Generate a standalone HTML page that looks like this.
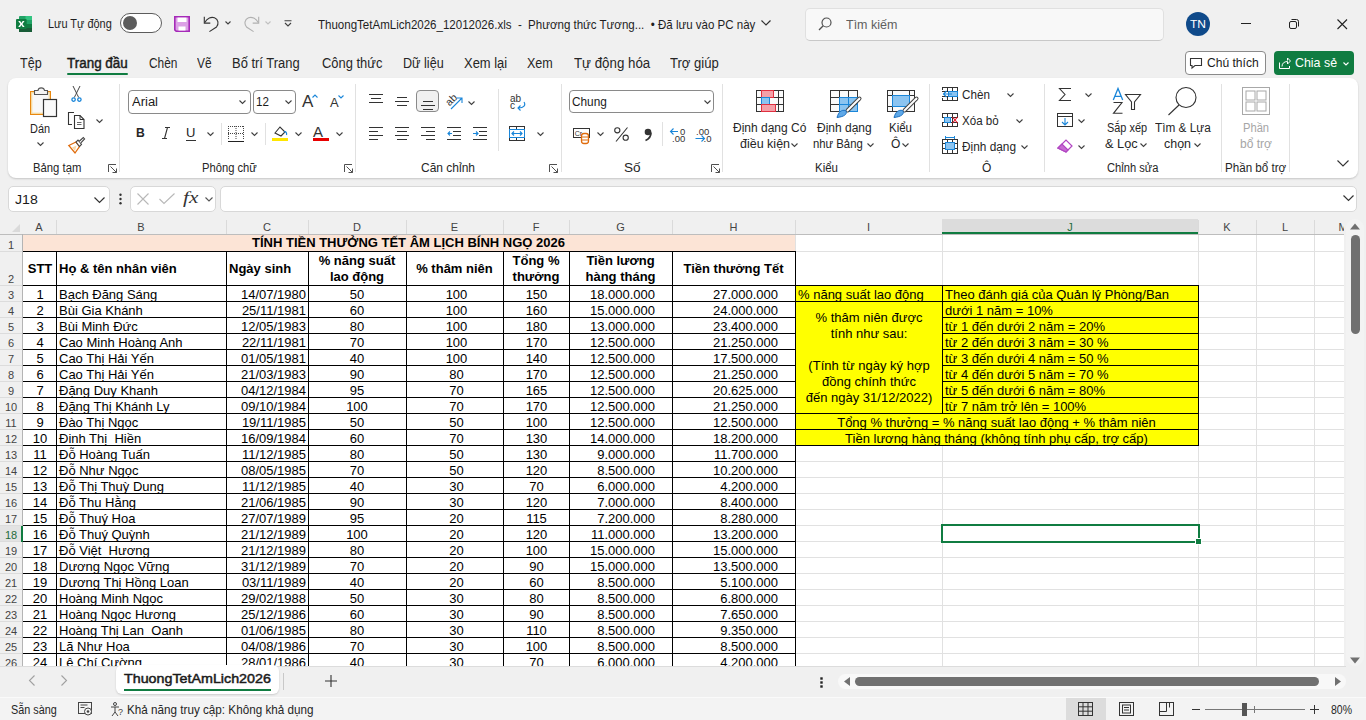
<!DOCTYPE html><html><head><meta charset="utf-8"><style>
html,body{margin:0;padding:0}
body{width:1366px;height:720px;overflow:hidden;position:relative;background:#f0f0f0;font-family:"Liberation Sans", sans-serif}
.a{position:absolute}
.t{position:absolute;white-space:nowrap;line-height:1;transform-origin:0 0}
svg{overflow:visible}
</style></head><body>
<svg class="a" style="left:16px;top:16px;" width="16" height="16" viewBox="0 0 16 16"><rect x="3" y="0" width="13" height="16" rx="1" fill="#21a366"/><rect x="9.5" y="0" width="6.5" height="4" fill="#33c481"/><rect x="3" y="8" width="13" height="4" fill="#107c41"/><rect x="3" y="12" width="13" height="4" fill="#185c37"/><rect x="0" y="3" width="10.7" height="10" rx="1" fill="#107c41"/><path d="M2.2 5h1.9l1.3 2.1L6.7 5h1.8L6.4 8l2.2 3H6.7L5.4 8.9 4.1 11H2.2l2.2-3z" fill="#fff"/></svg>
<span id="t0" class="t" style="left:48px;top:17px;font-size:13px;color:#1f1f1f;font-weight:normal;transform:scaleX(0.8421);">Lưu Tự động</span>
<div class="a" style="left:120px;top:13px;width:40px;height:18px;border:1px solid #5c5c5c;border-radius:10px;background:#fff"></div>
<div class="a" style="left:123px;top:16px;width:14px;height:14px;border-radius:50%;background:#5c5c5c"></div>
<svg class="a" style="left:174px;top:16px;" width="16" height="16" viewBox="0 0 16 16"><path d="M.8 .8h14.4v14.4H2.2L.8 13.8z" fill="#dca0e6" stroke="#a52ab8" stroke-width="1.6"/><rect x="3.5" y="1.6" width="9" height="4.4" fill="#fff"/><rect x="4.5" y="10.5" width="7" height="4" fill="#fff"/></svg>
<svg class="a" style="left:203px;top:16px;" width="18" height="17" viewBox="0 0 18 17"><path d="M1.3 .8v6.3h6" fill="none" stroke="#333" stroke-width="1.1"/><path d="M1.8 6.6C4 2 8.5 .5 11.5 1.8 15.5 3.5 16 8 13.5 11L6.4 15.6" fill="none" stroke="#333" stroke-width="1.1"/></svg>
<svg class="a" style="left:225px;top:21px;" width="6" height="4" viewBox="0 0 6 4"><path d="M.5 .5l2.5 2.5 2.5-2.5" fill="none" stroke="#404040" stroke-width="1.1"/></svg>
<svg class="a" style="left:243px;top:16px;" width="18" height="17" viewBox="0 0 18 17"><path d="M15.7 .8v6.3h-6" fill="none" stroke="#b0b0b0" stroke-width="1.1"/><path d="M15.2 6.6C13 2 8.5 .5 5.5 1.8 1.5 3.5 1 8 3.5 11L10.6 15.6" fill="none" stroke="#b0b0b0" stroke-width="1.1"/></svg>
<svg class="a" style="left:265px;top:21px;" width="6" height="4" viewBox="0 0 6 4"><path d="M.5 .5l2.5 2.5 2.5-2.5" fill="none" stroke="#c0c0c0" stroke-width="1.1"/></svg>
<svg class="a" style="left:284px;top:20px;" width="8" height="8" viewBox="0 0 8 8"><path d="M.5 .7h7M1 3l3 3 3-3" fill="none" stroke="#404040" stroke-width="1.1"/></svg>
<span id="t1" class="t" style="left:318px;top:18px;font-size:13px;color:#1f1f1f;font-weight:normal;transform:scaleX(0.8864);">ThuongTetAmLich2026_12012026.xls&nbsp; - &nbsp;Phương thức Tương...&nbsp; • Đã lưu vào PC này</span>
<svg class="a" style="left:761px;top:20px;" width="10" height="6" viewBox="0 0 10 6"><path d="M.5 .5l4.5 4.5 4.5-4.5" fill="none" stroke="#303030" stroke-width="1.2"/></svg>
<div class="a" style="left:805px;top:8px;width:357px;height:31px;background:#f8f8f8;border:1px solid #e0e0e0;border-bottom-color:#c8c8c8;border-radius:5px"></div>
<svg class="a" style="left:818px;top:17px;" width="14" height="14" viewBox="0 0 14 14"><circle cx="8.5" cy="5.5" r="4.5" fill="none" stroke="#505050" stroke-width="1.2"/><path d="M5.2 8.8L1 13" stroke="#505050" stroke-width="1.3"/></svg>
<span id="t2" class="t" style="left:846px;top:18px;font-size:13px;color:#5f5f5f;font-weight:normal;transform:scaleX(0.9623);">Tìm kiếm</span>
<div class="a" style="left:1186px;top:12px;width:24px;height:24px;border-radius:50%;background:#0f4a8a"></div>
<span id="t3" class="t" style="left:1190px;top:19px;font-size:10.5px;color:#fff;font-weight:normal;transform:scaleX(1.1429);">TN</span>
<svg class="a" style="left:1241px;top:23px;" width="10" height="2" viewBox="0 0 10 2"><path d="M0 .5h10" stroke="#222" stroke-width="1"/></svg>
<svg class="a" style="left:1289px;top:19px;" width="10" height="10" viewBox="0 0 10 10"><rect x=".5" y="2.5" width="7" height="7" rx="1.5" fill="none" stroke="#222"/><path d="M2.5 .5h5a2 2 0 0 1 2 2v5" fill="none" stroke="#222"/></svg>
<svg class="a" style="left:1337px;top:19px;" width="10" height="10" viewBox="0 0 10 10"><path d="M.5 .5l9.5 9.5M10 .5L.5 10" stroke="#222" stroke-width="1.1"/></svg>
<span id="t4" class="t" style="left:20px;top:56px;font-size:14px;color:#262626;font-weight:normal;transform:scaleX(0.8958);">Tệp</span>
<span id="t5" class="t" style="left:67px;top:56px;font-size:14px;color:#1b1b1b;font-weight:normal;transform:scaleX(0.9603);-webkit-text-stroke:0.45px #1b1b1b;">Trang đầu</span>
<span id="t6" class="t" style="left:148.5px;top:56px;font-size:14px;color:#262626;font-weight:normal;transform:scaleX(0.8485);">Chèn</span>
<span id="t7" class="t" style="left:197px;top:56px;font-size:14px;color:#262626;font-weight:normal;transform:scaleX(0.8529);">Vẽ</span>
<span id="t8" class="t" style="left:232px;top:56px;font-size:14px;color:#262626;font-weight:normal;transform:scaleX(0.9247);">Bố trí Trang</span>
<span id="t9" class="t" style="left:322px;top:56px;font-size:14px;color:#262626;font-weight:normal;transform:scaleX(0.9231);">Công thức</span>
<span id="t10" class="t" style="left:403px;top:56px;font-size:14px;color:#262626;font-weight:normal;transform:scaleX(0.9000);">Dữ liệu</span>
<span id="t11" class="t" style="left:464px;top:56px;font-size:14px;color:#262626;font-weight:normal;transform:scaleX(0.9255);">Xem lại</span>
<span id="t12" class="t" style="left:527px;top:56px;font-size:14px;color:#262626;font-weight:normal;transform:scaleX(0.8966);">Xem</span>
<span id="t13" class="t" style="left:574px;top:56px;font-size:14px;color:#262626;font-weight:normal;transform:scaleX(0.9500);">Tự động hóa</span>
<span id="t14" class="t" style="left:670px;top:56px;font-size:14px;color:#262626;font-weight:normal;transform:scaleX(0.9327);">Trợ giúp</span>
<div class="a" style="left:67px;top:73px;width:61px;height:2px;background:#107c41;border-radius:1px"></div>
<div class="a" style="left:1185px;top:51px;width:79px;height:22px;border:1px solid #8a8a8a;border-radius:4px;background:#fff"></div>
<svg class="a" style="left:1190px;top:58px;" width="12" height="11" viewBox="0 0 12 11"><path d="M.5 .5h11v7h-6.5l-3 2.5v-2.5h-1.5z" fill="none" stroke="#333" stroke-width="1.1"/></svg>
<span id="t15" class="t" style="left:1207px;top:56px;font-size:13px;color:#1b1b1b;font-weight:normal;transform:scaleX(0.9286);">Chú thích</span>
<div class="a" style="left:1274px;top:51px;width:80px;height:24px;background:#107c41;border-radius:4px"></div>
<svg class="a" style="left:1279px;top:58px;" width="12" height="11" viewBox="0 0 12 11"><path d="M.5 4.5v6h10v-2.5" fill="none" stroke="#fff" stroke-width="1"/><path d="M3 8.5c0-3.5 2.5-5 5.5-5V6l3-3-3-3v2.5" fill="none" stroke="#fff" stroke-width="1"/></svg>
<span id="t16" class="t" style="left:1295px;top:56px;font-size:13px;color:#fff;font-weight:normal;transform:scaleX(0.9545);">Chia sẻ</span>
<svg class="a" style="left:1343px;top:62px;" width="6" height="4" viewBox="0 0 6 4"><path d="M.5 .5l2.5 2.5 2.5-2.5" fill="none" stroke="#fff" stroke-width="1.1"/></svg>
<div class="a" style="left:8px;top:78px;width:1350px;height:100px;background:#fff;border-radius:8px;box-shadow:0 1px 2px rgba(0,0,0,.18)"></div>
<div class="a" style="left:119px;top:84px;width:1px;height:88px;background:#e1e1e1"></div>
<div class="a" style="left:355px;top:84px;width:1px;height:88px;background:#e1e1e1"></div>
<div class="a" style="left:561px;top:84px;width:1px;height:88px;background:#e1e1e1"></div>
<div class="a" style="left:722px;top:84px;width:1px;height:88px;background:#e1e1e1"></div>
<div class="a" style="left:929px;top:84px;width:1px;height:88px;background:#e1e1e1"></div>
<div class="a" style="left:1044px;top:84px;width:1px;height:88px;background:#e1e1e1"></div>
<div class="a" style="left:1221px;top:84px;width:1px;height:88px;background:#e1e1e1"></div>
<div class="a" style="left:1289px;top:84px;width:1px;height:88px;background:#e1e1e1"></div>
<span id="t17" class="t" style="left:33px;top:162px;font-size:12px;color:#262626;font-weight:normal;transform:scaleX(0.9412);">Bảng tạm</span>
<span id="t18" class="t" style="left:202px;top:162px;font-size:12px;color:#262626;font-weight:normal;transform:scaleX(0.9322);">Phông chữ</span>
<span id="t19" class="t" style="left:421px;top:162px;font-size:12px;color:#262626;font-weight:normal;transform:scaleX(1.0000);">Căn chỉnh</span>
<span id="t20" class="t" style="left:624px;top:162px;font-size:12px;color:#262626;font-weight:normal;transform:scaleX(1.1333);">Số</span>
<span id="t21" class="t" style="left:815px;top:162px;font-size:12px;color:#262626;font-weight:normal;transform:scaleX(0.9583);">Kiểu</span>
<span id="t22" class="t" style="left:982px;top:162px;font-size:12px;color:#262626;font-weight:normal;transform:scaleX(1.0000);">Ô</span>
<span id="t23" class="t" style="left:1107px;top:162px;font-size:12px;color:#262626;font-weight:normal;transform:scaleX(0.9273);">Chỉnh sửa</span>
<span id="t24" class="t" style="left:1225px;top:162px;font-size:12px;color:#262626;font-weight:normal;transform:scaleX(0.9683);">Phần bổ trợ</span>
<svg class="a" style="left:108px;top:164px;" width="9" height="9" viewBox="0 0 9 9"><path d="M.5 8V.5H8" fill="none" stroke="#505050"/><path d="M2.5 2.5l6 6M8.5 4.5v4h-4" fill="none" stroke="#505050"/></svg>
<svg class="a" style="left:344px;top:164px;" width="9" height="9" viewBox="0 0 9 9"><path d="M.5 8V.5H8" fill="none" stroke="#505050"/><path d="M2.5 2.5l6 6M8.5 4.5v4h-4" fill="none" stroke="#505050"/></svg>
<svg class="a" style="left:549px;top:164px;" width="9" height="9" viewBox="0 0 9 9"><path d="M.5 8V.5H8" fill="none" stroke="#505050"/><path d="M2.5 2.5l6 6M8.5 4.5v4h-4" fill="none" stroke="#505050"/></svg>
<svg class="a" style="left:711px;top:164px;" width="9" height="9" viewBox="0 0 9 9"><path d="M.5 8V.5H8" fill="none" stroke="#505050"/><path d="M2.5 2.5l6 6M8.5 4.5v4h-4" fill="none" stroke="#505050"/></svg>
<svg class="a" style="left:30px;top:86px;" width="28" height="32" viewBox="0 0 28 32"><rect x=".6" y="5.6" width="19.8" height="22.8" fill="#f8f8f8" stroke="#e8870f" stroke-width="1.2"/><rect x="1.8" y="6.8" width="17.4" height="20.4" fill="none" stroke="#f7d88f" stroke-width="1"/><path d="M4.5 8.5V4.5h3.5c.5-3.5 6-3.5 6.5 0h3v4z" fill="#f4f4f4" stroke="#555" stroke-width="1.1"/><rect x="13.5" y="13.5" width="13" height="17" fill="#fafafa" stroke="#333" stroke-width="1.2"/></svg>
<span id="t25" class="t" style="left:30px;top:123px;font-size:12px;color:#262626;font-weight:normal;transform:scaleX(0.9091);">Dán</span>
<svg class="a" style="left:37px;top:142px;" width="7" height="4" viewBox="0 0 7 4"><path d="M.5 .5l3 3 3-3" fill="none" stroke="#404040" stroke-width="1.1"/></svg>
<svg class="a" style="left:71px;top:85px;" width="11" height="17" viewBox="0 0 11 17"><path d="M2 1L6.2 9.5M9 1L4.8 9.5M4.8 9.5L3.3 12.5M6.2 9.5L7.7 12.5" fill="none" stroke="#444" stroke-width="1"/><circle cx="2.6" cy="14.6" r="1.7" fill="none" stroke="#1a86d9" stroke-width="1.3"/><circle cx="8.4" cy="14.6" r="1.7" fill="none" stroke="#1a86d9" stroke-width="1.3"/></svg>
<svg class="a" style="left:68px;top:111px;" width="17" height="18" viewBox="0 0 17 18"><path d="M6 1.5H.5v12H4" fill="none" stroke="#333" stroke-width="1.1"/><path d="M6.5 4.5H12l4 4v9H6.5z" fill="#fff" stroke="#333" stroke-width="1.1"/><path d="M12 4.5v4h4" fill="none" stroke="#333" stroke-width="1"/><path d="M9 11.5h4.5M9 13.5h4.5" stroke="#555" stroke-width=".9"/></svg>
<svg class="a" style="left:96px;top:119px;" width="7" height="4" viewBox="0 0 7 4"><path d="M.5 .5l3 3 3-3" fill="none" stroke="#404040" stroke-width="1.1"/></svg>
<svg class="a" style="left:68px;top:137px;" width="17" height="17" viewBox="0 0 17 17"><path d="M.8 8.5L8 5l3.5 4.5L7 16z" fill="#fff" stroke="#e06c0d" stroke-width="1.3"/><path d="M4 10.5L8.5 8.5 7 14z" fill="#fbd9a8"/><path d="M8 5l3.5 4.5 2-2L10 3z" fill="#fff" stroke="#444" stroke-width="1.1"/><path d="M11 4.5l4.3-4 1.3 1.5-4 4.2" fill="#fff" stroke="#444" stroke-width="1.1"/></svg>
<div class="a" style="left:128px;top:90px;width:121px;height:22px;border:1px solid #8a8a8a;border-radius:4px;background:#fff"></div>
<span id="t26" class="t" style="left:132px;top:96px;font-size:12.5px;color:#1b1b1b;font-weight:normal;transform:scaleX(1.0400);">Arial</span>
<svg class="a" style="left:239px;top:100px;" width="7" height="4" viewBox="0 0 7 4"><path d="M.5 .5l3 3 3-3" fill="none" stroke="#404040" stroke-width="1.1"/></svg>
<div class="a" style="left:253px;top:90px;width:41px;height:22px;border:1px solid #8a8a8a;border-radius:4px;background:#fff"></div>
<span id="t27" class="t" style="left:256px;top:96px;font-size:12.5px;color:#1b1b1b;font-weight:normal;transform:scaleX(0.9286);">12</span>
<svg class="a" style="left:285px;top:100px;" width="7" height="4" viewBox="0 0 7 4"><path d="M.5 .5l3 3 3-3" fill="none" stroke="#404040" stroke-width="1.1"/></svg>
<span id="t28" class="t" style="left:302px;top:93px;font-size:17px;color:#333;font-weight:normal;transform:scaleX(1.0000);">A</span>
<svg class="a" style="left:312px;top:94px;" width="6" height="4" viewBox="0 0 6 4"><path d="M.5 3.5l2.5-2.5 2.5 2.5" fill="none" stroke="#1a86d9" stroke-width="1.1"/></svg>
<span id="t29" class="t" style="left:330px;top:96px;font-size:13px;color:#333;font-weight:normal;transform:scaleX(1.0000);">A</span>
<svg class="a" style="left:338px;top:95px;" width="6" height="4" viewBox="0 0 6 4"><path d="M.5 .5l2.5 2.5 2.5-2.5" fill="none" stroke="#1a86d9" stroke-width="1.1"/></svg>
<span id="t30" class="t" style="left:136px;top:126px;font-size:13.5px;color:#262626;font-weight:bold;transform:scaleX(0.9000);">B</span>
<svg class="a" style="left:162px;top:126px;" width="8" height="14" viewBox="0 0 8 14"><path d="M3 1.5h5M0 12.5h5M5.5 1.5L2.5 12.5" fill="none" stroke="#333" stroke-width="1.1"/></svg>
<span id="t31" class="t" style="left:186px;top:126px;font-size:13px;color:#262626;font-weight:normal;transform:scaleX(1.0000);">U</span>
<div class="a" style="left:186px;top:140px;width:10px;height:1px;background:#333"></div>
<svg class="a" style="left:207px;top:132px;" width="7" height="4" viewBox="0 0 7 4"><path d="M.5 .5l3 3 3-3" fill="none" stroke="#404040" stroke-width="1.1"/></svg>
<div class="a" style="left:221px;top:123px;width:1px;height:22px;background:#e1e1e1"></div>
<svg class="a" style="left:228px;top:126px;" width="16" height="16" viewBox="0 0 16 16"><path d="M.5 0v14M15.5 0v14M0 .5h16M8 0v14M0 7.5h16" fill="none" stroke="#444" stroke-dasharray="1 1"/><path d="M0 15.5h16" stroke="#222" stroke-width="1"/></svg>
<svg class="a" style="left:251px;top:132px;" width="7" height="4" viewBox="0 0 7 4"><path d="M.5 .5l3 3 3-3" fill="none" stroke="#404040" stroke-width="1.1"/></svg>
<div class="a" style="left:265px;top:123px;width:1px;height:22px;background:#e1e1e1"></div>
<svg class="a" style="left:272px;top:125px;" width="17" height="17" viewBox="0 0 17 17"><path d="M3 8l5-6 5 5-4 4z" fill="none" stroke="#333" stroke-width="1.1"/><path d="M12 7c2 -1 3 1 2.5 3" fill="none" stroke="#1a86d9" stroke-width="1.2"/><rect x="0" y="13" width="16" height="3" fill="#ffe600"/></svg>
<svg class="a" style="left:295px;top:132px;" width="7" height="4" viewBox="0 0 7 4"><path d="M.5 .5l3 3 3-3" fill="none" stroke="#404040" stroke-width="1.1"/></svg>
<span id="t32" class="t" style="left:313px;top:124px;font-size:15px;color:#333;font-weight:normal;transform:scaleX(1.0000);">A</span>
<div class="a" style="left:313px;top:138px;width:16px;height:3px;background:#e80000"></div>
<svg class="a" style="left:336px;top:132px;" width="7" height="4" viewBox="0 0 7 4"><path d="M.5 .5l3 3 3-3" fill="none" stroke="#404040" stroke-width="1.1"/></svg>
<svg class="a" style="left:369px;top:94px;" width="15" height="12" viewBox="0 0 15 12"><path d="M0 0.5 H14" stroke="#333" stroke-width="1"/><path d="M2 4.5 H12" stroke="#333" stroke-width="1"/><path d="M0 8.5 H14" stroke="#333" stroke-width="1"/></svg>
<svg class="a" style="left:395px;top:97px;" width="15" height="12" viewBox="0 0 15 12"><path d="M2 0.5 H12" stroke="#333" stroke-width="1"/><path d="M0 4.5 H14" stroke="#333" stroke-width="1"/><path d="M2 8.5 H12" stroke="#333" stroke-width="1"/></svg>
<div class="a" style="left:416px;top:90px;width:23px;height:22px;background:#f0f0f0;border:1px solid #8a8a8a;border-radius:4px;box-sizing:border-box"></div>
<svg class="a" style="left:421px;top:101px;" width="15" height="12" viewBox="0 0 15 12"><path d="M2 0.5 H12" stroke="#333" stroke-width="1"/><path d="M0 4.5 H14" stroke="#333" stroke-width="1"/><path d="M2 8.5 H12" stroke="#333" stroke-width="1"/></svg>
<svg class="a" style="left:445px;top:92px;" width="19" height="19" viewBox="0 0 19 19"><text x="0" y="0" font-size="10.5" fill="#333" font-family="Liberation Sans" transform="translate(4.5 14.5) rotate(-45)">ab</text><path d="M6 17L16.5 6.5M12 6h5v5" fill="none" stroke="#1a86d9" stroke-width="1.1"/></svg>
<svg class="a" style="left:468px;top:101px;" width="7" height="4" viewBox="0 0 7 4"><path d="M.5 .5l3 3 3-3" fill="none" stroke="#404040" stroke-width="1.1"/></svg>
<svg class="a" style="left:369px;top:127px;" width="15" height="14" viewBox="0 0 15 14"><path d="M0 0.5 H14" stroke="#333" stroke-width="1"/><path d="M0 4.5 H9" stroke="#333" stroke-width="1"/><path d="M0 8.5 H14" stroke="#333" stroke-width="1"/><path d="M0 12.5 H9" stroke="#333" stroke-width="1"/></svg>
<svg class="a" style="left:395px;top:127px;" width="15" height="14" viewBox="0 0 15 14"><path d="M0 0.5 H14" stroke="#333" stroke-width="1"/><path d="M2 4.5 H12" stroke="#333" stroke-width="1"/><path d="M0 8.5 H14" stroke="#333" stroke-width="1"/><path d="M2 12.5 H12" stroke="#333" stroke-width="1"/></svg>
<svg class="a" style="left:421px;top:127px;" width="15" height="14" viewBox="0 0 15 14"><path d="M0 0.5 H14" stroke="#333" stroke-width="1"/><path d="M5 4.5 H14" stroke="#333" stroke-width="1"/><path d="M0 8.5 H14" stroke="#333" stroke-width="1"/><path d="M5 12.5 H14" stroke="#333" stroke-width="1"/></svg>
<svg class="a" style="left:447px;top:127px;" width="15" height="14" viewBox="0 0 15 14"><path d="M0 .5H14M6 4.5H14M6 8.5H14M0 12.5H14" stroke="#333" stroke-width="1"/><path d="M5 6.5H.8M3 4.5L1 6.5l2 2" fill="none" stroke="#1a86d9" stroke-width="1.1"/></svg>
<svg class="a" style="left:473px;top:127px;" width="15" height="14" viewBox="0 0 15 14"><path d="M0 .5H14M6 4.5H14M6 8.5H14M0 12.5H14" stroke="#333" stroke-width="1"/><path d="M0 6.5H4.5M3 4.5l2 2-2 2" fill="none" stroke="#1a86d9" stroke-width="1.1"/></svg>
<div class="a" style="left:498px;top:89px;width:1px;height:62px;background:#e1e1e1"></div>
<svg class="a" style="left:510px;top:93px;" width="18" height="18" viewBox="0 0 18 18"><text x="0" y="8.5" font-size="10" fill="#333" font-family="Liberation Sans">ab</text><text x="0" y="16" font-size="10" fill="#333" font-family="Liberation Sans">c</text><path d="M14 9c2 3 0 6-5.5 6M10.5 12.5L8 15l2.5 2.5" fill="none" stroke="#1a86d9" stroke-width="1.1"/></svg>
<svg class="a" style="left:509px;top:126px;" width="16" height="15" viewBox="0 0 16 15"><rect x=".5" y=".5" width="15" height="14" fill="#fff" stroke="#333"/><path d="M7.5 0v3M7.5 12v3" stroke="#333"/><rect x=".5" y="3.5" width="15" height="8" fill="#fff" stroke="#1a86d9"/><path d="M3 7.5h10M5 5.5L3 7.5l2 2M11 5.5l2 2-2 2" fill="none" stroke="#1a86d9" stroke-width="1.2"/></svg>
<svg class="a" style="left:537px;top:132px;" width="7" height="4" viewBox="0 0 7 4"><path d="M.5 .5l3 3 3-3" fill="none" stroke="#404040" stroke-width="1.1"/></svg>
<div class="a" style="left:569px;top:90px;width:145px;height:23px;border:1px solid #8a8a8a;border-radius:4px;background:#fff;box-sizing:border-box"></div>
<span id="t33" class="t" style="left:572px;top:96px;font-size:12.5px;color:#1b1b1b;font-weight:normal;transform:scaleX(0.9459);">Chung</span>
<svg class="a" style="left:704px;top:100px;" width="7" height="4" viewBox="0 0 7 4"><path d="M.5 .5l3 3 3-3" fill="none" stroke="#404040" stroke-width="1.1"/></svg>
<svg class="a" style="left:573px;top:128px;" width="18" height="17" viewBox="0 0 18 17"><rect x=".5" y=".5" width="16" height="9" fill="#fff" stroke="#333"/><text x="1.8" y="7.8" font-size="7" fill="#333" font-family="Liberation Sans">Cr</text><rect x="8.5" y="5.5" width="7" height="10" rx="2.5" fill="#fff" stroke="#e06c0d" stroke-width="1.3"/><path d="M8.5 9h7M8.5 12h7" stroke="#e06c0d" stroke-width="1"/></svg>
<svg class="a" style="left:597px;top:132px;" width="7" height="4" viewBox="0 0 7 4"><path d="M.5 .5l3 3 3-3" fill="none" stroke="#404040" stroke-width="1.1"/></svg>
<svg class="a" style="left:614px;top:127px;" width="16" height="15" viewBox="0 0 16 15"><circle cx="3.3" cy="3.3" r="2.6" fill="none" stroke="#333" stroke-width="1.1"/><circle cx="11.7" cy="10.7" r="2.6" fill="none" stroke="#333" stroke-width="1.1"/><path d="M2 14.5L13.5 .5" stroke="#333" stroke-width="1.1"/></svg>
<svg class="a" style="left:643px;top:128px;" width="10" height="13" viewBox="0 0 10 13"><circle cx="5" cy="4" r="3.3" fill="#333"/><path d="M8 4.5C8 8 6 11 2.5 12.5" fill="none" stroke="#333" stroke-width="1.8"/></svg>
<div class="a" style="left:662px;top:122px;width:1px;height:24px;background:#e1e1e1"></div>
<svg class="a" style="left:669px;top:126px;" width="17" height="17" viewBox="0 0 17 17"><path d="M9 5.5H1.5M4.5 2.5L1.5 5.5l3 3" fill="none" stroke="#1a86d9" stroke-width="1.1"/><text x="11" y="9" font-size="9.5" fill="#333" font-family="Liberation Sans">0</text><text x="3" y="16" font-size="9.5" fill="#333" font-family="Liberation Sans">.00</text></svg>
<svg class="a" style="left:695px;top:126px;" width="17" height="17" viewBox="0 0 17 17"><text x="1" y="9" font-size="9.5" fill="#333" font-family="Liberation Sans">.00</text><path d="M.5 12.5h9M6.5 9.5l3 3-3 3" fill="none" stroke="#1a86d9" stroke-width="1.1"/><text x="8.5" y="16" font-size="9.5" fill="#333" font-family="Liberation Sans">.0</text></svg>
<svg class="a" style="left:756px;top:90px;" width="28" height="22" viewBox="0 0 28 22"><rect x=".5" y=".5" width="27" height="21" fill="#fafafa" stroke="#333"/><path d="M.5 7.5h27M.5 14.5h27M5.5 .5v21M22.5 .5v21" stroke="#333" fill="none"/><rect x="5.5" y=".5" width="12" height="7" fill="#f4a0a8" stroke="#e03040"/><rect x="5.5" y="7.5" width="8" height="7" fill="#8cc4f0" stroke="#1a86d9"/><rect x="5.5" y="14.5" width="14" height="7" fill="#f4a0a8" stroke="#e03040"/></svg>
<span id="t34" class="t" style="left:733px;top:122px;font-size:12px;color:#262626;font-weight:normal;transform:scaleX(1.0000);">Định dạng Có</span>
<span id="t35" class="t" style="left:740px;top:138px;font-size:12px;color:#262626;font-weight:normal;transform:scaleX(1.0417);">điều kiện</span>
<svg class="a" style="left:791px;top:143px;" width="7" height="4" viewBox="0 0 7 4"><path d="M.5 .5l3 3 3-3" fill="none" stroke="#404040" stroke-width="1.1"/></svg>
<svg class="a" style="left:830px;top:90px;" width="32" height="28" viewBox="0 0 32 28"><rect x=".5" y=".5" width="27" height="21" fill="#fafafa" stroke="#333"/><path d="M.5 7.5h27M.5 14.5h27M9.5 .5v21M18.5 .5v21" stroke="#333" fill="none"/><rect x="9.5" y="7.5" width="18" height="14" fill="#8cc4f0" stroke="#1a86d9"/><path d="M9.5 14.5h18M18.5 7.5v14" stroke="#1a86d9"/><path d="M29.5 8.5L17.5 20.5" stroke="#444" stroke-width="4" stroke-linecap="round"/><path d="M29.5 8.5L17.5 20.5" stroke="#fff" stroke-width="2" stroke-linecap="round"/><path d="M7 27.5C8.5 22 11.5 19.5 15.5 20.5 17.5 22.5 16.5 26.5 7 27.5z" fill="#5ea8e8" stroke="#1a6fc0" stroke-width="1"/></svg>
<span id="t36" class="t" style="left:817px;top:122px;font-size:12px;color:#262626;font-weight:normal;transform:scaleX(1.0000);">Định dạng</span>
<span id="t37" class="t" style="left:813px;top:138px;font-size:12px;color:#262626;font-weight:normal;transform:scaleX(0.9434);">như Bảng</span>
<svg class="a" style="left:867px;top:143px;" width="7" height="4" viewBox="0 0 7 4"><path d="M.5 .5l3 3 3-3" fill="none" stroke="#404040" stroke-width="1.1"/></svg>
<svg class="a" style="left:887px;top:90px;" width="32" height="28" viewBox="0 0 32 28"><rect x=".5" y=".5" width="27" height="21" fill="#fafafa" stroke="#333"/><path d="M.5 5.5h27M5.5 .5v21M.5 16.5h5M22.5 .5v5" stroke="#333" fill="none"/><rect x="5.5" y="5.5" width="17" height="11" fill="#8cc4f0" stroke="#1a86d9"/><path d="M29.5 8.5L17.5 20.5" stroke="#444" stroke-width="4" stroke-linecap="round"/><path d="M29.5 8.5L17.5 20.5" stroke="#fff" stroke-width="2" stroke-linecap="round"/><path d="M7 27.5C8.5 22 11.5 19.5 15.5 20.5 17.5 22.5 16.5 26.5 7 27.5z" fill="#5ea8e8" stroke="#1a6fc0" stroke-width="1"/></svg>
<span id="t38" class="t" style="left:889px;top:122px;font-size:12px;color:#262626;font-weight:normal;transform:scaleX(0.9583);">Kiểu</span>
<span id="t39" class="t" style="left:891px;top:138px;font-size:12px;color:#262626;font-weight:normal;transform:scaleX(1.0000);">Ô</span>
<svg class="a" style="left:902px;top:143px;" width="7" height="4" viewBox="0 0 7 4"><path d="M.5 .5l3 3 3-3" fill="none" stroke="#404040" stroke-width="1.1"/></svg>
<svg class="a" style="left:942px;top:87px;" width="16" height="14" viewBox="0 0 16 14"><path d="M0 .5h16M0 13.5h16M15.5 0v14M.5 0v3M.5 11v3M5.5 0v4M5.5 10v4M10.5 0v14M0 4.5h7M0 9.5h7" fill="none" stroke="#333"/><rect x="6.5" y="4.5" width="9" height="5" fill="#8cc4f0" stroke="#1a86d9"/><path d="M10 7H1.5M4.5 4L1.5 7l3 3" fill="none" stroke="#1a86d9" stroke-width="1.2"/></svg>
<span id="t40" class="t" style="left:962px;top:89px;font-size:12.5px;color:#262626;font-weight:normal;transform:scaleX(0.9333);">Chèn</span>
<svg class="a" style="left:1007px;top:93px;" width="7" height="4" viewBox="0 0 7 4"><path d="M.5 .5l3 3 3-3" fill="none" stroke="#404040" stroke-width="1.1"/></svg>
<svg class="a" style="left:942px;top:113px;" width="16" height="14" viewBox="0 0 16 14"><path d="M0 .5h16M0 13.5h16M15.5 0v4M15.5 10v4M.5 0v4M.5 10v4M5.5 0v14M10.5 0v14M0 4.5h16M0 9.5h16" fill="none" stroke="#333"/><rect x="2.5" y="4.5" width="6" height="5" fill="#8cc4f0" stroke="#1a86d9"/><path d="M10.5 4l5 6M15.5 4l-5 6" stroke="#e81123" stroke-width="1.1"/></svg>
<span id="t41" class="t" style="left:962px;top:115px;font-size:12.5px;color:#262626;font-weight:normal;transform:scaleX(0.9250);">Xóa bỏ</span>
<svg class="a" style="left:1016px;top:119px;" width="7" height="4" viewBox="0 0 7 4"><path d="M.5 .5l3 3 3-3" fill="none" stroke="#404040" stroke-width="1.1"/></svg>
<svg class="a" style="left:942px;top:136px;" width="16" height="18" viewBox="0 0 16 18"><path d="M3 1.5h10M3.5 0v3M12.5 0v3" fill="none" stroke="#1a86d9"/><rect x=".5" y="3.5" width="15" height="14" fill="#fff" stroke="#333"/><path d="M5.5 3.5v14M10.5 3.5v14M.5 7.5h15M.5 12.5h15" stroke="#333"/><rect x="3.5" y="6.5" width="9" height="7" fill="#8cc4f0" stroke="#1a86d9"/></svg>
<span id="t42" class="t" style="left:962px;top:141px;font-size:12.5px;color:#262626;font-weight:normal;transform:scaleX(0.9474);">Định dạng</span>
<svg class="a" style="left:1021px;top:145px;" width="7" height="4" viewBox="0 0 7 4"><path d="M.5 .5l3 3 3-3" fill="none" stroke="#404040" stroke-width="1.1"/></svg>
<svg class="a" style="left:1058px;top:87px;" width="14" height="15" viewBox="0 0 14 15"><path d="M13 1.5H1.5L7 7.5 1.5 13.5H13" fill="none" stroke="#333" stroke-width="1.1"/></svg>
<svg class="a" style="left:1085px;top:93px;" width="7" height="4" viewBox="0 0 7 4"><path d="M.5 .5l3 3 3-3" fill="none" stroke="#404040" stroke-width="1.1"/></svg>
<svg class="a" style="left:1057px;top:113px;" width="16" height="15" viewBox="0 0 16 15"><rect x=".5" y=".5" width="15" height="13" fill="#fff" stroke="#333"/><path d="M.5 3.5h15" stroke="#333"/><path d="M8 5v7M5 9l3 3 3-3" fill="none" stroke="#1a86d9" stroke-width="1.1"/></svg>
<svg class="a" style="left:1078px;top:119px;" width="7" height="4" viewBox="0 0 7 4"><path d="M.5 .5l3 3 3-3" fill="none" stroke="#404040" stroke-width="1.1"/></svg>
<svg class="a" style="left:1057px;top:138px;" width="16" height="16" viewBox="0 0 16 16"><path d="M1 10l8-8 6 6-6 6z" fill="#fff" stroke="#b146c2" stroke-width="1.2"/><path d="M1 10l4-4 6 6-2 2z" fill="#c76bd3" stroke="#b146c2" stroke-width="1.2"/></svg>
<svg class="a" style="left:1078px;top:145px;" width="7" height="4" viewBox="0 0 7 4"><path d="M.5 .5l3 3 3-3" fill="none" stroke="#404040" stroke-width="1.1"/></svg>
<svg class="a" style="left:1111px;top:87px;" width="32" height="28" viewBox="0 0 32 28"><path d="M2.3 13L7 1.5 11.7 13M3.8 9.3h6.4" fill="none" stroke="#1a86d9" stroke-width="1.3"/><path d="M2.5 15.5h8.5L2.5 26.3h9" fill="none" stroke="#333" stroke-width="1.1"/><path d="M14.5 7.5h15l-6 7.5v7.5h-3V15z" fill="#fff" stroke="#333" stroke-width="1.1"/></svg>
<span id="t43" class="t" style="left:1107px;top:122px;font-size:12px;color:#262626;font-weight:normal;transform:scaleX(0.9091);">Sắp xếp</span>
<span id="t44" class="t" style="left:1105px;top:138px;font-size:12px;color:#262626;font-weight:normal;transform:scaleX(1.0645);">&amp; Lọc</span>
<svg class="a" style="left:1140px;top:143px;" width="7" height="4" viewBox="0 0 7 4"><path d="M.5 .5l3 3 3-3" fill="none" stroke="#404040" stroke-width="1.1"/></svg>
<svg class="a" style="left:1167px;top:86px;" width="31" height="30" viewBox="0 0 31 30"><circle cx="19" cy="11.5" r="10" fill="none" stroke="#333" stroke-width="1.1"/><path d="M12 19L1.5 29" stroke="#333" stroke-width="1.1"/></svg>
<span id="t45" class="t" style="left:1155px;top:122px;font-size:12px;color:#262626;font-weight:normal;transform:scaleX(0.9825);">Tìm &amp; Lựa</span>
<span id="t46" class="t" style="left:1164px;top:138px;font-size:12px;color:#262626;font-weight:normal;transform:scaleX(1.0385);">chọn</span>
<svg class="a" style="left:1194px;top:143px;" width="7" height="4" viewBox="0 0 7 4"><path d="M.5 .5l3 3 3-3" fill="none" stroke="#404040" stroke-width="1.1"/></svg>
<svg class="a" style="left:1242px;top:87px;" width="28" height="28" viewBox="0 0 28 28"><rect x=".5" y=".5" width="27" height="27" fill="none" stroke="#a8a8a8"/><rect x="4" y="4" width="9" height="9" fill="none" stroke="#a8a8a8"/><rect x="15" y="4" width="9" height="9" fill="none" stroke="#a8a8a8"/><rect x="4" y="15" width="9" height="9" fill="none" stroke="#a8a8a8"/><rect x="15" y="15" width="9" height="9" fill="none" stroke="#a8a8a8"/></svg>
<span id="t47" class="t" style="left:1243px;top:122px;font-size:12px;color:#a6a6a6;font-weight:normal;transform:scaleX(0.9286);">Phần</span>
<span id="t48" class="t" style="left:1240px;top:138px;font-size:12px;color:#a6a6a6;font-weight:normal;transform:scaleX(1.0000);">bổ trợ</span>
<svg class="a" style="left:1337px;top:160px;" width="12" height="7" viewBox="0 0 12 7"><path d="M.5 .5l5.5 5.5 5.5-5.5" fill="none" stroke="#333" stroke-width="1.1"/></svg>
<div class="a" style="left:8px;top:186px;width:102px;height:26px;background:#fff;border:1px solid #d8d8d8;border-radius:5px;box-sizing:border-box"></div>
<span id="t49" class="t" style="left:15px;top:193px;font-size:13.5px;color:#1b1b1b;font-weight:normal;transform:scaleX(1.0455);">J18</span>
<svg class="a" style="left:94px;top:197px;" width="11" height="6" viewBox="0 0 11 6"><path d="M.5 .5l5 5 5-5" fill="none" stroke="#333" stroke-width="1.2"/></svg>
<svg class="a" style="left:119px;top:193px;" width="3" height="12" viewBox="0 0 3 12"><circle cx="1.5" cy="1.8" r="1.2" fill="#333"/><circle cx="1.5" cy="6" r="1.2" fill="#333"/><circle cx="1.5" cy="10.2" r="1.2" fill="#333"/></svg>
<div class="a" style="left:130px;top:186px;width:86px;height:26px;background:#fff;border:1px solid #d8d8d8;border-radius:5px;box-sizing:border-box"></div>
<svg class="a" style="left:137px;top:193px;" width="12" height="12" viewBox="0 0 12 12"><path d="M.5 .5l11 11M11.5 .5l-11 11" stroke="#b8b8b8" stroke-width="1.1"/></svg>
<svg class="a" style="left:159px;top:193px;" width="16" height="11" viewBox="0 0 16 11"><path d="M.5 6l4.5 4.5L15.5 .5" fill="none" stroke="#b8b8b8" stroke-width="1.1"/></svg>
<span id="t50" class="t" style="left:183px;top:189px;font-size:17px;color:#333;font-weight:normal;transform:scaleX(1.2500);font-family:\"Liberation Serif\",serif;"><i>fx</i></span>
<svg class="a" style="left:205px;top:197px;" width="8" height="5" viewBox="0 0 8 5"><path d="M.5 .5l3.5 3.5 3.5-3.5" fill="none" stroke="#555" stroke-width="1.1"/></svg>
<div class="a" style="left:220px;top:186px;width:1137px;height:26px;background:#fff;border:1px solid #d8d8d8;border-radius:5px;box-sizing:border-box"></div>
<svg class="a" style="left:1343px;top:195px;" width="11" height="6" viewBox="0 0 11 6"><path d="M.5 .5l5 5 5-5" fill="none" stroke="#333" stroke-width="1.2"/></svg>
<div class="a" style="left:0px;top:219px;width:1344px;height:447px;background:#fff;overflow:hidden"></div>
<div class="a" style="left:0;top:219px;width:1344px;height:447px;overflow:hidden">
<div class="a" style="left:0px;top:0px;width:1344px;height:15px;background:#f0f0f0"></div>
<div class="a" style="left:0px;top:15px;width:22px;height:432px;background:#f0f0f0"></div>
<div class="a" style="left:56px;top:15px;width:1px;height:432px;background:#e1e1e1"></div>
<div class="a" style="left:226px;top:15px;width:1px;height:432px;background:#e1e1e1"></div>
<div class="a" style="left:308px;top:15px;width:1px;height:432px;background:#e1e1e1"></div>
<div class="a" style="left:406px;top:15px;width:1px;height:432px;background:#e1e1e1"></div>
<div class="a" style="left:503px;top:15px;width:1px;height:432px;background:#e1e1e1"></div>
<div class="a" style="left:569px;top:15px;width:1px;height:432px;background:#e1e1e1"></div>
<div class="a" style="left:672px;top:15px;width:1px;height:432px;background:#e1e1e1"></div>
<div class="a" style="left:795px;top:15px;width:1px;height:432px;background:#e1e1e1"></div>
<div class="a" style="left:942px;top:15px;width:1px;height:432px;background:#e1e1e1"></div>
<div class="a" style="left:1198px;top:15px;width:1px;height:432px;background:#e1e1e1"></div>
<div class="a" style="left:1256px;top:15px;width:1px;height:432px;background:#e1e1e1"></div>
<div class="a" style="left:1314px;top:15px;width:1px;height:432px;background:#e1e1e1"></div>
<div class="a" style="left:1372px;top:15px;width:1px;height:432px;background:#e1e1e1"></div>
<div class="a" style="left:22px;top:32px;width:1322px;height:1px;background:#e1e1e1"></div>
<div class="a" style="left:22px;top:66px;width:1322px;height:1px;background:#e1e1e1"></div>
<div class="a" style="left:22px;top:82px;width:1322px;height:1px;background:#e1e1e1"></div>
<div class="a" style="left:22px;top:98px;width:1322px;height:1px;background:#e1e1e1"></div>
<div class="a" style="left:22px;top:114px;width:1322px;height:1px;background:#e1e1e1"></div>
<div class="a" style="left:22px;top:130px;width:1322px;height:1px;background:#e1e1e1"></div>
<div class="a" style="left:22px;top:146px;width:1322px;height:1px;background:#e1e1e1"></div>
<div class="a" style="left:22px;top:162px;width:1322px;height:1px;background:#e1e1e1"></div>
<div class="a" style="left:22px;top:178px;width:1322px;height:1px;background:#e1e1e1"></div>
<div class="a" style="left:22px;top:194px;width:1322px;height:1px;background:#e1e1e1"></div>
<div class="a" style="left:22px;top:210px;width:1322px;height:1px;background:#e1e1e1"></div>
<div class="a" style="left:22px;top:226px;width:1322px;height:1px;background:#e1e1e1"></div>
<div class="a" style="left:22px;top:242px;width:1322px;height:1px;background:#e1e1e1"></div>
<div class="a" style="left:22px;top:258px;width:1322px;height:1px;background:#e1e1e1"></div>
<div class="a" style="left:22px;top:274px;width:1322px;height:1px;background:#e1e1e1"></div>
<div class="a" style="left:22px;top:290px;width:1322px;height:1px;background:#e1e1e1"></div>
<div class="a" style="left:22px;top:306px;width:1322px;height:1px;background:#e1e1e1"></div>
<div class="a" style="left:22px;top:322px;width:1322px;height:1px;background:#e1e1e1"></div>
<div class="a" style="left:22px;top:338px;width:1322px;height:1px;background:#e1e1e1"></div>
<div class="a" style="left:22px;top:354px;width:1322px;height:1px;background:#e1e1e1"></div>
<div class="a" style="left:22px;top:370px;width:1322px;height:1px;background:#e1e1e1"></div>
<div class="a" style="left:22px;top:386px;width:1322px;height:1px;background:#e1e1e1"></div>
<div class="a" style="left:22px;top:402px;width:1322px;height:1px;background:#e1e1e1"></div>
<div class="a" style="left:22px;top:418px;width:1322px;height:1px;background:#e1e1e1"></div>
<div class="a" style="left:22px;top:434px;width:1322px;height:1px;background:#e1e1e1"></div>
<div class="a" style="left:22px;top:450px;width:1322px;height:1px;background:#e1e1e1"></div>
<div class="a" style="left:56px;top:1px;width:1px;height:14px;background:#dadada"></div>
<div class="a" style="left:226px;top:1px;width:1px;height:14px;background:#dadada"></div>
<div class="a" style="left:308px;top:1px;width:1px;height:14px;background:#dadada"></div>
<div class="a" style="left:406px;top:1px;width:1px;height:14px;background:#dadada"></div>
<div class="a" style="left:503px;top:1px;width:1px;height:14px;background:#dadada"></div>
<div class="a" style="left:569px;top:1px;width:1px;height:14px;background:#dadada"></div>
<div class="a" style="left:672px;top:1px;width:1px;height:14px;background:#dadada"></div>
<div class="a" style="left:795px;top:1px;width:1px;height:14px;background:#dadada"></div>
<div class="a" style="left:942px;top:1px;width:1px;height:14px;background:#dadada"></div>
<div class="a" style="left:1198px;top:1px;width:1px;height:14px;background:#dadada"></div>
<div class="a" style="left:1256px;top:1px;width:1px;height:14px;background:#dadada"></div>
<div class="a" style="left:1314px;top:1px;width:1px;height:14px;background:#dadada"></div>
<div class="a" style="left:1372px;top:1px;width:1px;height:14px;background:#dadada"></div>
<div class="a" style="left:0px;top:32px;width:22px;height:1px;background:#dcdcdc"></div>
<div class="a" style="left:0px;top:66px;width:22px;height:1px;background:#dcdcdc"></div>
<div class="a" style="left:0px;top:82px;width:22px;height:1px;background:#dcdcdc"></div>
<div class="a" style="left:0px;top:98px;width:22px;height:1px;background:#dcdcdc"></div>
<div class="a" style="left:0px;top:114px;width:22px;height:1px;background:#dcdcdc"></div>
<div class="a" style="left:0px;top:130px;width:22px;height:1px;background:#dcdcdc"></div>
<div class="a" style="left:0px;top:146px;width:22px;height:1px;background:#dcdcdc"></div>
<div class="a" style="left:0px;top:162px;width:22px;height:1px;background:#dcdcdc"></div>
<div class="a" style="left:0px;top:178px;width:22px;height:1px;background:#dcdcdc"></div>
<div class="a" style="left:0px;top:194px;width:22px;height:1px;background:#dcdcdc"></div>
<div class="a" style="left:0px;top:210px;width:22px;height:1px;background:#dcdcdc"></div>
<div class="a" style="left:0px;top:226px;width:22px;height:1px;background:#dcdcdc"></div>
<div class="a" style="left:0px;top:242px;width:22px;height:1px;background:#dcdcdc"></div>
<div class="a" style="left:0px;top:258px;width:22px;height:1px;background:#dcdcdc"></div>
<div class="a" style="left:0px;top:274px;width:22px;height:1px;background:#dcdcdc"></div>
<div class="a" style="left:0px;top:290px;width:22px;height:1px;background:#dcdcdc"></div>
<div class="a" style="left:0px;top:306px;width:22px;height:1px;background:#dcdcdc"></div>
<div class="a" style="left:0px;top:322px;width:22px;height:1px;background:#dcdcdc"></div>
<div class="a" style="left:0px;top:338px;width:22px;height:1px;background:#dcdcdc"></div>
<div class="a" style="left:0px;top:354px;width:22px;height:1px;background:#dcdcdc"></div>
<div class="a" style="left:0px;top:370px;width:22px;height:1px;background:#dcdcdc"></div>
<div class="a" style="left:0px;top:386px;width:22px;height:1px;background:#dcdcdc"></div>
<div class="a" style="left:0px;top:402px;width:22px;height:1px;background:#dcdcdc"></div>
<div class="a" style="left:0px;top:418px;width:22px;height:1px;background:#dcdcdc"></div>
<div class="a" style="left:0px;top:434px;width:22px;height:1px;background:#dcdcdc"></div>
<div class="a" style="left:0px;top:450px;width:22px;height:1px;background:#dcdcdc"></div>
<div class="a" style="left:942px;top:0px;width:256px;height:15px;background:#dcdcdc"></div>
<div class="a" style="left:942px;top:13px;width:256px;height:2px;background:#107c41"></div>
<div class="a" style="left:0px;top:15px;width:1344px;height:1px;background:#bdbdbd"></div>
<div class="a" style="left:0px;top:307px;width:22px;height:15px;background:#e3e3e3"></div>
<div class="a" style="left:22px;top:15px;width:1px;height:432px;background:#b4b4b4"></div>
<svg class="a" style="left:12px;top:5px" width="8" height="8" viewBox="0 0 8 8"><path d="M8 0V8H0z" fill="#dadada"/></svg>
<span class="t" style="left:22px;top:3px;width:34px;text-align:center;font-size:11px;color:#444;font-weight:normal;">A</span>
<span class="t" style="left:56px;top:3px;width:170px;text-align:center;font-size:11px;color:#444;font-weight:normal;">B</span>
<span class="t" style="left:226px;top:3px;width:82px;text-align:center;font-size:11px;color:#444;font-weight:normal;">C</span>
<span class="t" style="left:308px;top:3px;width:98px;text-align:center;font-size:11px;color:#444;font-weight:normal;">D</span>
<span class="t" style="left:406px;top:3px;width:97px;text-align:center;font-size:11px;color:#444;font-weight:normal;">E</span>
<span class="t" style="left:503px;top:3px;width:66px;text-align:center;font-size:11px;color:#444;font-weight:normal;">F</span>
<span class="t" style="left:569px;top:3px;width:103px;text-align:center;font-size:11px;color:#444;font-weight:normal;">G</span>
<span class="t" style="left:672px;top:3px;width:123px;text-align:center;font-size:11px;color:#444;font-weight:normal;">H</span>
<span class="t" style="left:795px;top:3px;width:147px;text-align:center;font-size:11px;color:#444;font-weight:normal;">I</span>
<span class="t" style="left:942px;top:3px;width:256px;text-align:center;font-size:11px;color:#1f6b3a;font-weight:normal;">J</span>
<span class="t" style="left:1198px;top:3px;width:58px;text-align:center;font-size:11px;color:#444;font-weight:normal;">K</span>
<span class="t" style="left:1256px;top:3px;width:58px;text-align:center;font-size:11px;color:#444;font-weight:normal;">L</span>
<span class="t" style="left:1314px;top:3px;width:58px;text-align:center;font-size:11px;color:#444;font-weight:normal;">M</span>
<span class="t" style="left:0px;top:21px;width:22px;text-align:center;font-size:11px;color:#444;font-weight:normal;">1</span>
<span class="t" style="left:0px;top:55px;width:22px;text-align:center;font-size:11px;color:#444;font-weight:normal;">2</span>
<span class="t" style="left:0px;top:71px;width:22px;text-align:center;font-size:11px;color:#444;font-weight:normal;">3</span>
<span class="t" style="left:0px;top:87px;width:22px;text-align:center;font-size:11px;color:#444;font-weight:normal;">4</span>
<span class="t" style="left:0px;top:103px;width:22px;text-align:center;font-size:11px;color:#444;font-weight:normal;">5</span>
<span class="t" style="left:0px;top:119px;width:22px;text-align:center;font-size:11px;color:#444;font-weight:normal;">6</span>
<span class="t" style="left:0px;top:135px;width:22px;text-align:center;font-size:11px;color:#444;font-weight:normal;">7</span>
<span class="t" style="left:0px;top:151px;width:22px;text-align:center;font-size:11px;color:#444;font-weight:normal;">8</span>
<span class="t" style="left:0px;top:167px;width:22px;text-align:center;font-size:11px;color:#444;font-weight:normal;">9</span>
<span class="t" style="left:0px;top:183px;width:22px;text-align:center;font-size:11px;color:#444;font-weight:normal;">10</span>
<span class="t" style="left:0px;top:199px;width:22px;text-align:center;font-size:11px;color:#444;font-weight:normal;">11</span>
<span class="t" style="left:0px;top:215px;width:22px;text-align:center;font-size:11px;color:#444;font-weight:normal;">12</span>
<span class="t" style="left:0px;top:231px;width:22px;text-align:center;font-size:11px;color:#444;font-weight:normal;">13</span>
<span class="t" style="left:0px;top:247px;width:22px;text-align:center;font-size:11px;color:#444;font-weight:normal;">14</span>
<span class="t" style="left:0px;top:263px;width:22px;text-align:center;font-size:11px;color:#444;font-weight:normal;">15</span>
<span class="t" style="left:0px;top:279px;width:22px;text-align:center;font-size:11px;color:#444;font-weight:normal;">16</span>
<span class="t" style="left:0px;top:295px;width:22px;text-align:center;font-size:11px;color:#444;font-weight:normal;">17</span>
<span class="t" style="left:0px;top:311px;width:22px;text-align:center;font-size:11px;color:#1f6b3a;font-weight:normal;">18</span>
<span class="t" style="left:0px;top:327px;width:22px;text-align:center;font-size:11px;color:#444;font-weight:normal;">19</span>
<span class="t" style="left:0px;top:343px;width:22px;text-align:center;font-size:11px;color:#444;font-weight:normal;">20</span>
<span class="t" style="left:0px;top:359px;width:22px;text-align:center;font-size:11px;color:#444;font-weight:normal;">21</span>
<span class="t" style="left:0px;top:375px;width:22px;text-align:center;font-size:11px;color:#444;font-weight:normal;">22</span>
<span class="t" style="left:0px;top:391px;width:22px;text-align:center;font-size:11px;color:#444;font-weight:normal;">23</span>
<span class="t" style="left:0px;top:407px;width:22px;text-align:center;font-size:11px;color:#444;font-weight:normal;">24</span>
<span class="t" style="left:0px;top:423px;width:22px;text-align:center;font-size:11px;color:#444;font-weight:normal;">25</span>
<span class="t" style="left:0px;top:439px;width:22px;text-align:center;font-size:11px;color:#444;font-weight:normal;">26</span>
<div class="a" style="left:23px;top:16px;width:772px;height:16px;background:#fce4d6"></div>
<span class="t" style="left:22px;top:17px;width:773px;text-align:center;font-size:13px;color:#000;font-weight:bold;">TÍNH TIỀN THƯỞNG TẾT ÂM LỊCH BÍNH NGỌ 2026</span>
<div class="a" style="left:23px;top:33px;width:772px;height:414px;background:#fff"></div>
<div class="a" style="left:56px;top:32px;width:1px;height:415px;background:#000"></div>
<div class="a" style="left:226px;top:32px;width:1px;height:415px;background:#000"></div>
<div class="a" style="left:308px;top:32px;width:1px;height:415px;background:#000"></div>
<div class="a" style="left:406px;top:32px;width:1px;height:415px;background:#000"></div>
<div class="a" style="left:503px;top:32px;width:1px;height:415px;background:#000"></div>
<div class="a" style="left:569px;top:32px;width:1px;height:415px;background:#000"></div>
<div class="a" style="left:672px;top:32px;width:1px;height:415px;background:#000"></div>
<div class="a" style="left:795px;top:32px;width:1px;height:415px;background:#000"></div>
<div class="a" style="left:23px;top:32px;width:772px;height:1px;background:#000"></div>
<div class="a" style="left:23px;top:66px;width:772px;height:1px;background:#000"></div>
<div class="a" style="left:23px;top:82px;width:772px;height:1px;background:#000"></div>
<div class="a" style="left:23px;top:98px;width:772px;height:1px;background:#000"></div>
<div class="a" style="left:23px;top:114px;width:772px;height:1px;background:#000"></div>
<div class="a" style="left:23px;top:130px;width:772px;height:1px;background:#000"></div>
<div class="a" style="left:23px;top:146px;width:772px;height:1px;background:#000"></div>
<div class="a" style="left:23px;top:162px;width:772px;height:1px;background:#000"></div>
<div class="a" style="left:23px;top:178px;width:772px;height:1px;background:#000"></div>
<div class="a" style="left:23px;top:194px;width:772px;height:1px;background:#000"></div>
<div class="a" style="left:23px;top:210px;width:772px;height:1px;background:#000"></div>
<div class="a" style="left:23px;top:226px;width:772px;height:1px;background:#000"></div>
<div class="a" style="left:23px;top:242px;width:772px;height:1px;background:#000"></div>
<div class="a" style="left:23px;top:258px;width:772px;height:1px;background:#000"></div>
<div class="a" style="left:23px;top:274px;width:772px;height:1px;background:#000"></div>
<div class="a" style="left:23px;top:290px;width:772px;height:1px;background:#000"></div>
<div class="a" style="left:23px;top:306px;width:772px;height:1px;background:#000"></div>
<div class="a" style="left:23px;top:322px;width:772px;height:1px;background:#000"></div>
<div class="a" style="left:23px;top:338px;width:772px;height:1px;background:#000"></div>
<div class="a" style="left:23px;top:354px;width:772px;height:1px;background:#000"></div>
<div class="a" style="left:23px;top:370px;width:772px;height:1px;background:#000"></div>
<div class="a" style="left:23px;top:386px;width:772px;height:1px;background:#000"></div>
<div class="a" style="left:23px;top:402px;width:772px;height:1px;background:#000"></div>
<div class="a" style="left:23px;top:418px;width:772px;height:1px;background:#000"></div>
<div class="a" style="left:23px;top:434px;width:772px;height:1px;background:#000"></div>
<div class="a" style="left:23px;top:450px;width:772px;height:1px;background:#000"></div>
<span class="t" style="left:23px;top:43px;width:34px;text-align:center;font-size:13px;color:#000;font-weight:bold;">STT</span>
<span class="t" style="left:59px;top:43px;font-size:13px;color:#000;font-weight:bold;">Họ &amp; tên nhân viên</span>
<span class="t" style="left:229px;top:43px;font-size:13px;color:#000;font-weight:bold;">Ngày sinh</span>
<span class="t" style="left:308px;top:35px;width:98px;text-align:center;font-size:13px;color:#000;font-weight:bold;">% năng suất</span>
<span class="t" style="left:308px;top:51px;width:98px;text-align:center;font-size:13px;color:#000;font-weight:bold;">lao động</span>
<span class="t" style="left:406px;top:43px;width:97px;text-align:center;font-size:13px;color:#000;font-weight:bold;">% thâm niên</span>
<span class="t" style="left:503px;top:35px;width:66px;text-align:center;font-size:13px;color:#000;font-weight:bold;">Tổng %</span>
<span class="t" style="left:503px;top:51px;width:66px;text-align:center;font-size:13px;color:#000;font-weight:bold;">thưởng</span>
<span class="t" style="left:569px;top:35px;width:103px;text-align:center;font-size:13px;color:#000;font-weight:bold;">Tiền lương</span>
<span class="t" style="left:569px;top:51px;width:103px;text-align:center;font-size:13px;color:#000;font-weight:bold;">hàng tháng</span>
<span class="t" style="left:672px;top:43px;width:123px;text-align:center;font-size:13px;color:#000;font-weight:bold;">Tiền thưởng Tết</span>
<span class="t" style="left:23px;top:69px;width:34px;text-align:center;font-size:13px;color:#000;font-weight:normal;">1</span>
<span class="t" style="left:59px;top:69px;font-size:13px;color:#000;font-weight:normal;">Bạch Đăng Sáng</span>
<span class="t" style="left:226px;top:69px;width:80px;text-align:right;font-size:13px;color:#000;font-weight:normal;">14/07/1980</span>
<span class="t" style="left:308px;top:69px;width:98px;text-align:center;font-size:13px;color:#000;font-weight:normal;">50</span>
<span class="t" style="left:408px;top:69px;width:97px;text-align:center;font-size:13px;color:#000;font-weight:normal;">100</span>
<span class="t" style="left:504px;top:69px;width:65px;text-align:center;font-size:13px;color:#000;font-weight:normal;">150</span>
<span class="t" style="left:569px;top:69px;width:86px;text-align:right;font-size:13px;color:#000;font-weight:normal;">18.000.000</span>
<span class="t" style="left:672px;top:69px;width:106px;text-align:right;font-size:13px;color:#000;font-weight:normal;">27.000.000</span>
<span class="t" style="left:23px;top:85px;width:34px;text-align:center;font-size:13px;color:#000;font-weight:normal;">2</span>
<span class="t" style="left:59px;top:85px;font-size:13px;color:#000;font-weight:normal;">Bùi Gia Khánh</span>
<span class="t" style="left:226px;top:85px;width:80px;text-align:right;font-size:13px;color:#000;font-weight:normal;">25/11/1981</span>
<span class="t" style="left:308px;top:85px;width:98px;text-align:center;font-size:13px;color:#000;font-weight:normal;">60</span>
<span class="t" style="left:408px;top:85px;width:97px;text-align:center;font-size:13px;color:#000;font-weight:normal;">100</span>
<span class="t" style="left:504px;top:85px;width:65px;text-align:center;font-size:13px;color:#000;font-weight:normal;">160</span>
<span class="t" style="left:569px;top:85px;width:86px;text-align:right;font-size:13px;color:#000;font-weight:normal;">15.000.000</span>
<span class="t" style="left:672px;top:85px;width:106px;text-align:right;font-size:13px;color:#000;font-weight:normal;">24.000.000</span>
<span class="t" style="left:23px;top:101px;width:34px;text-align:center;font-size:13px;color:#000;font-weight:normal;">3</span>
<span class="t" style="left:59px;top:101px;font-size:13px;color:#000;font-weight:normal;">Bùi Minh Đức</span>
<span class="t" style="left:226px;top:101px;width:80px;text-align:right;font-size:13px;color:#000;font-weight:normal;">12/05/1983</span>
<span class="t" style="left:308px;top:101px;width:98px;text-align:center;font-size:13px;color:#000;font-weight:normal;">80</span>
<span class="t" style="left:408px;top:101px;width:97px;text-align:center;font-size:13px;color:#000;font-weight:normal;">100</span>
<span class="t" style="left:504px;top:101px;width:65px;text-align:center;font-size:13px;color:#000;font-weight:normal;">180</span>
<span class="t" style="left:569px;top:101px;width:86px;text-align:right;font-size:13px;color:#000;font-weight:normal;">13.000.000</span>
<span class="t" style="left:672px;top:101px;width:106px;text-align:right;font-size:13px;color:#000;font-weight:normal;">23.400.000</span>
<span class="t" style="left:23px;top:117px;width:34px;text-align:center;font-size:13px;color:#000;font-weight:normal;">4</span>
<span class="t" style="left:59px;top:117px;font-size:13px;color:#000;font-weight:normal;">Cao Minh Hoàng Anh</span>
<span class="t" style="left:226px;top:117px;width:80px;text-align:right;font-size:13px;color:#000;font-weight:normal;">22/11/1981</span>
<span class="t" style="left:308px;top:117px;width:98px;text-align:center;font-size:13px;color:#000;font-weight:normal;">70</span>
<span class="t" style="left:408px;top:117px;width:97px;text-align:center;font-size:13px;color:#000;font-weight:normal;">100</span>
<span class="t" style="left:504px;top:117px;width:65px;text-align:center;font-size:13px;color:#000;font-weight:normal;">170</span>
<span class="t" style="left:569px;top:117px;width:86px;text-align:right;font-size:13px;color:#000;font-weight:normal;">12.500.000</span>
<span class="t" style="left:672px;top:117px;width:106px;text-align:right;font-size:13px;color:#000;font-weight:normal;">21.250.000</span>
<span class="t" style="left:23px;top:133px;width:34px;text-align:center;font-size:13px;color:#000;font-weight:normal;">5</span>
<span class="t" style="left:59px;top:133px;font-size:13px;color:#000;font-weight:normal;">Cao Thị Hải Yến</span>
<span class="t" style="left:226px;top:133px;width:80px;text-align:right;font-size:13px;color:#000;font-weight:normal;">01/05/1981</span>
<span class="t" style="left:308px;top:133px;width:98px;text-align:center;font-size:13px;color:#000;font-weight:normal;">40</span>
<span class="t" style="left:408px;top:133px;width:97px;text-align:center;font-size:13px;color:#000;font-weight:normal;">100</span>
<span class="t" style="left:504px;top:133px;width:65px;text-align:center;font-size:13px;color:#000;font-weight:normal;">140</span>
<span class="t" style="left:569px;top:133px;width:86px;text-align:right;font-size:13px;color:#000;font-weight:normal;">12.500.000</span>
<span class="t" style="left:672px;top:133px;width:106px;text-align:right;font-size:13px;color:#000;font-weight:normal;">17.500.000</span>
<span class="t" style="left:23px;top:149px;width:34px;text-align:center;font-size:13px;color:#000;font-weight:normal;">6</span>
<span class="t" style="left:59px;top:149px;font-size:13px;color:#000;font-weight:normal;">Cao Thị Hải Yến</span>
<span class="t" style="left:226px;top:149px;width:80px;text-align:right;font-size:13px;color:#000;font-weight:normal;">21/03/1983</span>
<span class="t" style="left:308px;top:149px;width:98px;text-align:center;font-size:13px;color:#000;font-weight:normal;">90</span>
<span class="t" style="left:408px;top:149px;width:97px;text-align:center;font-size:13px;color:#000;font-weight:normal;">80</span>
<span class="t" style="left:504px;top:149px;width:65px;text-align:center;font-size:13px;color:#000;font-weight:normal;">170</span>
<span class="t" style="left:569px;top:149px;width:86px;text-align:right;font-size:13px;color:#000;font-weight:normal;">12.500.000</span>
<span class="t" style="left:672px;top:149px;width:106px;text-align:right;font-size:13px;color:#000;font-weight:normal;">21.250.000</span>
<span class="t" style="left:23px;top:165px;width:34px;text-align:center;font-size:13px;color:#000;font-weight:normal;">7</span>
<span class="t" style="left:59px;top:165px;font-size:13px;color:#000;font-weight:normal;">Đặng Duy Khanh</span>
<span class="t" style="left:226px;top:165px;width:80px;text-align:right;font-size:13px;color:#000;font-weight:normal;">04/12/1984</span>
<span class="t" style="left:308px;top:165px;width:98px;text-align:center;font-size:13px;color:#000;font-weight:normal;">95</span>
<span class="t" style="left:408px;top:165px;width:97px;text-align:center;font-size:13px;color:#000;font-weight:normal;">70</span>
<span class="t" style="left:504px;top:165px;width:65px;text-align:center;font-size:13px;color:#000;font-weight:normal;">165</span>
<span class="t" style="left:569px;top:165px;width:86px;text-align:right;font-size:13px;color:#000;font-weight:normal;">12.500.000</span>
<span class="t" style="left:672px;top:165px;width:106px;text-align:right;font-size:13px;color:#000;font-weight:normal;">20.625.000</span>
<span class="t" style="left:23px;top:181px;width:34px;text-align:center;font-size:13px;color:#000;font-weight:normal;">8</span>
<span class="t" style="left:59px;top:181px;font-size:13px;color:#000;font-weight:normal;">Đặng Thị Khánh Ly</span>
<span class="t" style="left:226px;top:181px;width:80px;text-align:right;font-size:13px;color:#000;font-weight:normal;">09/10/1984</span>
<span class="t" style="left:308px;top:181px;width:98px;text-align:center;font-size:13px;color:#000;font-weight:normal;">100</span>
<span class="t" style="left:408px;top:181px;width:97px;text-align:center;font-size:13px;color:#000;font-weight:normal;">70</span>
<span class="t" style="left:504px;top:181px;width:65px;text-align:center;font-size:13px;color:#000;font-weight:normal;">170</span>
<span class="t" style="left:569px;top:181px;width:86px;text-align:right;font-size:13px;color:#000;font-weight:normal;">12.500.000</span>
<span class="t" style="left:672px;top:181px;width:106px;text-align:right;font-size:13px;color:#000;font-weight:normal;">21.250.000</span>
<span class="t" style="left:23px;top:197px;width:34px;text-align:center;font-size:13px;color:#000;font-weight:normal;">9</span>
<span class="t" style="left:59px;top:197px;font-size:13px;color:#000;font-weight:normal;">Đào Thị Ngọc</span>
<span class="t" style="left:226px;top:197px;width:80px;text-align:right;font-size:13px;color:#000;font-weight:normal;">19/11/1985</span>
<span class="t" style="left:308px;top:197px;width:98px;text-align:center;font-size:13px;color:#000;font-weight:normal;">50</span>
<span class="t" style="left:408px;top:197px;width:97px;text-align:center;font-size:13px;color:#000;font-weight:normal;">50</span>
<span class="t" style="left:504px;top:197px;width:65px;text-align:center;font-size:13px;color:#000;font-weight:normal;">100</span>
<span class="t" style="left:569px;top:197px;width:86px;text-align:right;font-size:13px;color:#000;font-weight:normal;">12.500.000</span>
<span class="t" style="left:672px;top:197px;width:106px;text-align:right;font-size:13px;color:#000;font-weight:normal;">12.500.000</span>
<span class="t" style="left:23px;top:213px;width:34px;text-align:center;font-size:13px;color:#000;font-weight:normal;">10</span>
<span class="t" style="left:59px;top:213px;font-size:13px;color:#000;font-weight:normal;">Đinh Thị&nbsp; Hiền</span>
<span class="t" style="left:226px;top:213px;width:80px;text-align:right;font-size:13px;color:#000;font-weight:normal;">16/09/1984</span>
<span class="t" style="left:308px;top:213px;width:98px;text-align:center;font-size:13px;color:#000;font-weight:normal;">60</span>
<span class="t" style="left:408px;top:213px;width:97px;text-align:center;font-size:13px;color:#000;font-weight:normal;">70</span>
<span class="t" style="left:504px;top:213px;width:65px;text-align:center;font-size:13px;color:#000;font-weight:normal;">130</span>
<span class="t" style="left:569px;top:213px;width:86px;text-align:right;font-size:13px;color:#000;font-weight:normal;">14.000.000</span>
<span class="t" style="left:672px;top:213px;width:106px;text-align:right;font-size:13px;color:#000;font-weight:normal;">18.200.000</span>
<span class="t" style="left:23px;top:229px;width:34px;text-align:center;font-size:13px;color:#000;font-weight:normal;">11</span>
<span class="t" style="left:59px;top:229px;font-size:13px;color:#000;font-weight:normal;">Đỗ Hoàng Tuấn</span>
<span class="t" style="left:226px;top:229px;width:80px;text-align:right;font-size:13px;color:#000;font-weight:normal;">11/12/1985</span>
<span class="t" style="left:308px;top:229px;width:98px;text-align:center;font-size:13px;color:#000;font-weight:normal;">80</span>
<span class="t" style="left:408px;top:229px;width:97px;text-align:center;font-size:13px;color:#000;font-weight:normal;">50</span>
<span class="t" style="left:504px;top:229px;width:65px;text-align:center;font-size:13px;color:#000;font-weight:normal;">130</span>
<span class="t" style="left:569px;top:229px;width:86px;text-align:right;font-size:13px;color:#000;font-weight:normal;">9.000.000</span>
<span class="t" style="left:672px;top:229px;width:106px;text-align:right;font-size:13px;color:#000;font-weight:normal;">11.700.000</span>
<span class="t" style="left:23px;top:245px;width:34px;text-align:center;font-size:13px;color:#000;font-weight:normal;">12</span>
<span class="t" style="left:59px;top:245px;font-size:13px;color:#000;font-weight:normal;">Đỗ Như Ngọc</span>
<span class="t" style="left:226px;top:245px;width:80px;text-align:right;font-size:13px;color:#000;font-weight:normal;">08/05/1985</span>
<span class="t" style="left:308px;top:245px;width:98px;text-align:center;font-size:13px;color:#000;font-weight:normal;">70</span>
<span class="t" style="left:408px;top:245px;width:97px;text-align:center;font-size:13px;color:#000;font-weight:normal;">50</span>
<span class="t" style="left:504px;top:245px;width:65px;text-align:center;font-size:13px;color:#000;font-weight:normal;">120</span>
<span class="t" style="left:569px;top:245px;width:86px;text-align:right;font-size:13px;color:#000;font-weight:normal;">8.500.000</span>
<span class="t" style="left:672px;top:245px;width:106px;text-align:right;font-size:13px;color:#000;font-weight:normal;">10.200.000</span>
<span class="t" style="left:23px;top:261px;width:34px;text-align:center;font-size:13px;color:#000;font-weight:normal;">13</span>
<span class="t" style="left:59px;top:261px;font-size:13px;color:#000;font-weight:normal;">Đỗ Thị Thuỳ Dung</span>
<span class="t" style="left:226px;top:261px;width:80px;text-align:right;font-size:13px;color:#000;font-weight:normal;">11/12/1985</span>
<span class="t" style="left:308px;top:261px;width:98px;text-align:center;font-size:13px;color:#000;font-weight:normal;">40</span>
<span class="t" style="left:408px;top:261px;width:97px;text-align:center;font-size:13px;color:#000;font-weight:normal;">30</span>
<span class="t" style="left:504px;top:261px;width:65px;text-align:center;font-size:13px;color:#000;font-weight:normal;">70</span>
<span class="t" style="left:569px;top:261px;width:86px;text-align:right;font-size:13px;color:#000;font-weight:normal;">6.000.000</span>
<span class="t" style="left:672px;top:261px;width:106px;text-align:right;font-size:13px;color:#000;font-weight:normal;">4.200.000</span>
<span class="t" style="left:23px;top:277px;width:34px;text-align:center;font-size:13px;color:#000;font-weight:normal;">14</span>
<span class="t" style="left:59px;top:277px;font-size:13px;color:#000;font-weight:normal;">Đỗ Thu Hằng</span>
<span class="t" style="left:226px;top:277px;width:80px;text-align:right;font-size:13px;color:#000;font-weight:normal;">21/06/1985</span>
<span class="t" style="left:308px;top:277px;width:98px;text-align:center;font-size:13px;color:#000;font-weight:normal;">90</span>
<span class="t" style="left:408px;top:277px;width:97px;text-align:center;font-size:13px;color:#000;font-weight:normal;">30</span>
<span class="t" style="left:504px;top:277px;width:65px;text-align:center;font-size:13px;color:#000;font-weight:normal;">120</span>
<span class="t" style="left:569px;top:277px;width:86px;text-align:right;font-size:13px;color:#000;font-weight:normal;">7.000.000</span>
<span class="t" style="left:672px;top:277px;width:106px;text-align:right;font-size:13px;color:#000;font-weight:normal;">8.400.000</span>
<span class="t" style="left:23px;top:293px;width:34px;text-align:center;font-size:13px;color:#000;font-weight:normal;">15</span>
<span class="t" style="left:59px;top:293px;font-size:13px;color:#000;font-weight:normal;">Đỗ Thuý Hoa</span>
<span class="t" style="left:226px;top:293px;width:80px;text-align:right;font-size:13px;color:#000;font-weight:normal;">27/07/1989</span>
<span class="t" style="left:308px;top:293px;width:98px;text-align:center;font-size:13px;color:#000;font-weight:normal;">95</span>
<span class="t" style="left:408px;top:293px;width:97px;text-align:center;font-size:13px;color:#000;font-weight:normal;">20</span>
<span class="t" style="left:504px;top:293px;width:65px;text-align:center;font-size:13px;color:#000;font-weight:normal;">115</span>
<span class="t" style="left:569px;top:293px;width:86px;text-align:right;font-size:13px;color:#000;font-weight:normal;">7.200.000</span>
<span class="t" style="left:672px;top:293px;width:106px;text-align:right;font-size:13px;color:#000;font-weight:normal;">8.280.000</span>
<span class="t" style="left:23px;top:309px;width:34px;text-align:center;font-size:13px;color:#000;font-weight:normal;">16</span>
<span class="t" style="left:59px;top:309px;font-size:13px;color:#000;font-weight:normal;">Đỗ Thuý Quỳnh</span>
<span class="t" style="left:226px;top:309px;width:80px;text-align:right;font-size:13px;color:#000;font-weight:normal;">21/12/1989</span>
<span class="t" style="left:308px;top:309px;width:98px;text-align:center;font-size:13px;color:#000;font-weight:normal;">100</span>
<span class="t" style="left:408px;top:309px;width:97px;text-align:center;font-size:13px;color:#000;font-weight:normal;">20</span>
<span class="t" style="left:504px;top:309px;width:65px;text-align:center;font-size:13px;color:#000;font-weight:normal;">120</span>
<span class="t" style="left:569px;top:309px;width:86px;text-align:right;font-size:13px;color:#000;font-weight:normal;">11.000.000</span>
<span class="t" style="left:672px;top:309px;width:106px;text-align:right;font-size:13px;color:#000;font-weight:normal;">13.200.000</span>
<span class="t" style="left:23px;top:325px;width:34px;text-align:center;font-size:13px;color:#000;font-weight:normal;">17</span>
<span class="t" style="left:59px;top:325px;font-size:13px;color:#000;font-weight:normal;">Đỗ Việt&nbsp; Hương</span>
<span class="t" style="left:226px;top:325px;width:80px;text-align:right;font-size:13px;color:#000;font-weight:normal;">21/12/1989</span>
<span class="t" style="left:308px;top:325px;width:98px;text-align:center;font-size:13px;color:#000;font-weight:normal;">80</span>
<span class="t" style="left:408px;top:325px;width:97px;text-align:center;font-size:13px;color:#000;font-weight:normal;">20</span>
<span class="t" style="left:504px;top:325px;width:65px;text-align:center;font-size:13px;color:#000;font-weight:normal;">100</span>
<span class="t" style="left:569px;top:325px;width:86px;text-align:right;font-size:13px;color:#000;font-weight:normal;">15.000.000</span>
<span class="t" style="left:672px;top:325px;width:106px;text-align:right;font-size:13px;color:#000;font-weight:normal;">15.000.000</span>
<span class="t" style="left:23px;top:341px;width:34px;text-align:center;font-size:13px;color:#000;font-weight:normal;">18</span>
<span class="t" style="left:59px;top:341px;font-size:13px;color:#000;font-weight:normal;">Dương Ngọc Vững</span>
<span class="t" style="left:226px;top:341px;width:80px;text-align:right;font-size:13px;color:#000;font-weight:normal;">31/12/1989</span>
<span class="t" style="left:308px;top:341px;width:98px;text-align:center;font-size:13px;color:#000;font-weight:normal;">70</span>
<span class="t" style="left:408px;top:341px;width:97px;text-align:center;font-size:13px;color:#000;font-weight:normal;">20</span>
<span class="t" style="left:504px;top:341px;width:65px;text-align:center;font-size:13px;color:#000;font-weight:normal;">90</span>
<span class="t" style="left:569px;top:341px;width:86px;text-align:right;font-size:13px;color:#000;font-weight:normal;">15.000.000</span>
<span class="t" style="left:672px;top:341px;width:106px;text-align:right;font-size:13px;color:#000;font-weight:normal;">13.500.000</span>
<span class="t" style="left:23px;top:357px;width:34px;text-align:center;font-size:13px;color:#000;font-weight:normal;">19</span>
<span class="t" style="left:59px;top:357px;font-size:13px;color:#000;font-weight:normal;">Dương Thị Hồng Loan</span>
<span class="t" style="left:226px;top:357px;width:80px;text-align:right;font-size:13px;color:#000;font-weight:normal;">03/11/1989</span>
<span class="t" style="left:308px;top:357px;width:98px;text-align:center;font-size:13px;color:#000;font-weight:normal;">40</span>
<span class="t" style="left:408px;top:357px;width:97px;text-align:center;font-size:13px;color:#000;font-weight:normal;">20</span>
<span class="t" style="left:504px;top:357px;width:65px;text-align:center;font-size:13px;color:#000;font-weight:normal;">60</span>
<span class="t" style="left:569px;top:357px;width:86px;text-align:right;font-size:13px;color:#000;font-weight:normal;">8.500.000</span>
<span class="t" style="left:672px;top:357px;width:106px;text-align:right;font-size:13px;color:#000;font-weight:normal;">5.100.000</span>
<span class="t" style="left:23px;top:373px;width:34px;text-align:center;font-size:13px;color:#000;font-weight:normal;">20</span>
<span class="t" style="left:59px;top:373px;font-size:13px;color:#000;font-weight:normal;">Hoàng Minh Ngọc</span>
<span class="t" style="left:226px;top:373px;width:80px;text-align:right;font-size:13px;color:#000;font-weight:normal;">29/02/1988</span>
<span class="t" style="left:308px;top:373px;width:98px;text-align:center;font-size:13px;color:#000;font-weight:normal;">50</span>
<span class="t" style="left:408px;top:373px;width:97px;text-align:center;font-size:13px;color:#000;font-weight:normal;">30</span>
<span class="t" style="left:504px;top:373px;width:65px;text-align:center;font-size:13px;color:#000;font-weight:normal;">80</span>
<span class="t" style="left:569px;top:373px;width:86px;text-align:right;font-size:13px;color:#000;font-weight:normal;">8.500.000</span>
<span class="t" style="left:672px;top:373px;width:106px;text-align:right;font-size:13px;color:#000;font-weight:normal;">6.800.000</span>
<span class="t" style="left:23px;top:389px;width:34px;text-align:center;font-size:13px;color:#000;font-weight:normal;">21</span>
<span class="t" style="left:59px;top:389px;font-size:13px;color:#000;font-weight:normal;">Hoàng Ngọc Hương</span>
<span class="t" style="left:226px;top:389px;width:80px;text-align:right;font-size:13px;color:#000;font-weight:normal;">25/12/1986</span>
<span class="t" style="left:308px;top:389px;width:98px;text-align:center;font-size:13px;color:#000;font-weight:normal;">60</span>
<span class="t" style="left:408px;top:389px;width:97px;text-align:center;font-size:13px;color:#000;font-weight:normal;">30</span>
<span class="t" style="left:504px;top:389px;width:65px;text-align:center;font-size:13px;color:#000;font-weight:normal;">90</span>
<span class="t" style="left:569px;top:389px;width:86px;text-align:right;font-size:13px;color:#000;font-weight:normal;">8.500.000</span>
<span class="t" style="left:672px;top:389px;width:106px;text-align:right;font-size:13px;color:#000;font-weight:normal;">7.650.000</span>
<span class="t" style="left:23px;top:405px;width:34px;text-align:center;font-size:13px;color:#000;font-weight:normal;">22</span>
<span class="t" style="left:59px;top:405px;font-size:13px;color:#000;font-weight:normal;">Hoàng Thị Lan&nbsp; Oanh</span>
<span class="t" style="left:226px;top:405px;width:80px;text-align:right;font-size:13px;color:#000;font-weight:normal;">01/06/1985</span>
<span class="t" style="left:308px;top:405px;width:98px;text-align:center;font-size:13px;color:#000;font-weight:normal;">80</span>
<span class="t" style="left:408px;top:405px;width:97px;text-align:center;font-size:13px;color:#000;font-weight:normal;">30</span>
<span class="t" style="left:504px;top:405px;width:65px;text-align:center;font-size:13px;color:#000;font-weight:normal;">110</span>
<span class="t" style="left:569px;top:405px;width:86px;text-align:right;font-size:13px;color:#000;font-weight:normal;">8.500.000</span>
<span class="t" style="left:672px;top:405px;width:106px;text-align:right;font-size:13px;color:#000;font-weight:normal;">9.350.000</span>
<span class="t" style="left:23px;top:421px;width:34px;text-align:center;font-size:13px;color:#000;font-weight:normal;">23</span>
<span class="t" style="left:59px;top:421px;font-size:13px;color:#000;font-weight:normal;">Lã Như Hoa</span>
<span class="t" style="left:226px;top:421px;width:80px;text-align:right;font-size:13px;color:#000;font-weight:normal;">04/08/1986</span>
<span class="t" style="left:308px;top:421px;width:98px;text-align:center;font-size:13px;color:#000;font-weight:normal;">70</span>
<span class="t" style="left:408px;top:421px;width:97px;text-align:center;font-size:13px;color:#000;font-weight:normal;">30</span>
<span class="t" style="left:504px;top:421px;width:65px;text-align:center;font-size:13px;color:#000;font-weight:normal;">100</span>
<span class="t" style="left:569px;top:421px;width:86px;text-align:right;font-size:13px;color:#000;font-weight:normal;">8.500.000</span>
<span class="t" style="left:672px;top:421px;width:106px;text-align:right;font-size:13px;color:#000;font-weight:normal;">8.500.000</span>
<span class="t" style="left:23px;top:437px;width:34px;text-align:center;font-size:13px;color:#000;font-weight:normal;">24</span>
<span class="t" style="left:59px;top:437px;font-size:13px;color:#000;font-weight:normal;">Lê Chí Cường</span>
<span class="t" style="left:226px;top:437px;width:80px;text-align:right;font-size:13px;color:#000;font-weight:normal;">28/01/1986</span>
<span class="t" style="left:308px;top:437px;width:98px;text-align:center;font-size:13px;color:#000;font-weight:normal;">40</span>
<span class="t" style="left:408px;top:437px;width:97px;text-align:center;font-size:13px;color:#000;font-weight:normal;">30</span>
<span class="t" style="left:504px;top:437px;width:65px;text-align:center;font-size:13px;color:#000;font-weight:normal;">70</span>
<span class="t" style="left:569px;top:437px;width:86px;text-align:right;font-size:13px;color:#000;font-weight:normal;">6.000.000</span>
<span class="t" style="left:672px;top:437px;width:106px;text-align:right;font-size:13px;color:#000;font-weight:normal;">4.200.000</span>
<div class="a" style="left:796px;top:67px;width:402px;height:160px;background:#ffff00"></div>
<div class="a" style="left:795px;top:66px;width:404px;height:1px;background:#000"></div>
<div class="a" style="left:795px;top:82px;width:404px;height:1px;background:#000"></div>
<div class="a" style="left:795px;top:194px;width:404px;height:1px;background:#000"></div>
<div class="a" style="left:795px;top:210px;width:404px;height:1px;background:#000"></div>
<div class="a" style="left:795px;top:226px;width:404px;height:1px;background:#000"></div>
<div class="a" style="left:942px;top:98px;width:256px;height:1px;background:#000"></div>
<div class="a" style="left:942px;top:114px;width:256px;height:1px;background:#000"></div>
<div class="a" style="left:942px;top:130px;width:256px;height:1px;background:#000"></div>
<div class="a" style="left:942px;top:146px;width:256px;height:1px;background:#000"></div>
<div class="a" style="left:942px;top:162px;width:256px;height:1px;background:#000"></div>
<div class="a" style="left:942px;top:178px;width:256px;height:1px;background:#000"></div>
<div class="a" style="left:795px;top:66px;width:1px;height:161px;background:#000"></div>
<div class="a" style="left:942px;top:66px;width:1px;height:128px;background:#000"></div>
<div class="a" style="left:1198px;top:66px;width:1px;height:161px;background:#000"></div>
<span class="t" style="left:798px;top:69px;font-size:13px;color:#000;font-weight:normal;">% năng suất lao động</span>
<span class="t" style="left:945px;top:69px;font-size:13px;color:#000;font-weight:normal;">Theo đánh giá của Quản lý Phòng/Ban</span>
<span class="t" style="left:945px;top:85px;font-size:13px;color:#000;font-weight:normal;">dưới 1 năm = 10%</span>
<span class="t" style="left:945px;top:101px;font-size:13px;color:#000;font-weight:normal;">từ 1 đến dưới 2 năm = 20%</span>
<span class="t" style="left:945px;top:117px;font-size:13px;color:#000;font-weight:normal;">từ 2 đến dưới 3 năm = 30 %</span>
<span class="t" style="left:945px;top:133px;font-size:13px;color:#000;font-weight:normal;">từ 3 đến dưới 4 năm = 50 %</span>
<span class="t" style="left:945px;top:149px;font-size:13px;color:#000;font-weight:normal;">từ 4 đến dưới 5 năm = 70 %</span>
<span class="t" style="left:945px;top:165px;font-size:13px;color:#000;font-weight:normal;">từ 5 đến dưới 6 năm = 80%</span>
<span class="t" style="left:945px;top:181px;font-size:13px;color:#000;font-weight:normal;">từ 7 năm trở lên = 100%</span>
<span class="t" style="left:796px;top:92px;width:146px;text-align:center;font-size:13px;color:#000;font-weight:normal;">% thâm niên được</span>
<span class="t" style="left:796px;top:108px;width:146px;text-align:center;font-size:13px;color:#000;font-weight:normal;">tính như sau:</span>
<span class="t" style="left:796px;top:140px;width:146px;text-align:center;font-size:13px;color:#000;font-weight:normal;">(Tính từ ngày ký hợp</span>
<span class="t" style="left:796px;top:156px;width:146px;text-align:center;font-size:13px;color:#000;font-weight:normal;">đồng chính thức</span>
<span class="t" style="left:796px;top:172px;width:146px;text-align:center;font-size:13px;color:#000;font-weight:normal;">đến ngày 31/12/2022)</span>
<span class="t" style="left:795px;top:197px;width:403px;text-align:center;font-size:13px;color:#000;font-weight:normal;">Tổng % thưởng = % năng suất lao động + % thâm niên</span>
<span class="t" style="left:795px;top:213px;width:403px;text-align:center;font-size:13px;color:#000;font-weight:normal;">Tiền lương hàng tháng (không tính phụ cấp, trợ cấp)</span>
<div class="a" style="left:941px;top:305px;width:259px;height:19px;border:2px solid #107c41;box-sizing:border-box"></div>
<div class="a" style="left:1195px;top:319px;width:5px;height:5px;background:#107c41;border:1px solid #fff"></div>
<div class="a" style="left:21px;top:307px;width:2px;height:16px;background:#107c41"></div>
</div>
<div class="a" style="left:1346px;top:219px;width:18px;height:447px;background:#f3f3f3;border-radius:9px"></div>
<svg class="a" style="left:1350px;top:223px;" width="10" height="7" viewBox="0 0 10 7"><path d="M0 6.5L5 .5 10 6.5z" fill="#707070"/></svg>
<div class="a" style="left:1351px;top:235px;width:9px;height:99px;background:#707070;border-radius:5px"></div>
<svg class="a" style="left:1350px;top:657px;" width="10" height="7" viewBox="0 0 10 7"><path d="M0 .5L5 6.5 10 .5z" fill="#707070"/></svg>
<div class="a" style="left:0px;top:666px;width:1366px;height:31px;background:#f0f0f0"></div>
<div class="a" style="left:0px;top:666px;width:1346px;height:1px;background:#dcdcdc"></div>
<svg class="a" style="left:29px;top:675px;" width="6" height="11" viewBox="0 0 6 11"><path d="M5.5 .5l-5 5 5 5" fill="none" stroke="#a0a0a0" stroke-width="1.1"/></svg>
<svg class="a" style="left:61px;top:675px;" width="6" height="11" viewBox="0 0 6 11"><path d="M.5 .5l5 5-5 5" fill="none" stroke="#a0a0a0" stroke-width="1.1"/></svg>
<div class="a" style="left:116px;top:665px;width:163px;height:29px;background:#fff;border-radius:6px;box-shadow:0 1px 2px rgba(0,0,0,.15)"></div>
<span id="t51" class="t" style="left:124px;top:672px;font-size:13.5px;color:#1b1b1b;font-weight:normal;transform:scaleX(1.0576);-webkit-text-stroke:0.5px #1b1b1b;">ThuongTetAmLich2026</span>
<div class="a" style="left:124px;top:689px;width:147px;height:2px;background:#107c41"></div>
<div class="a" style="left:283px;top:673px;width:1px;height:17px;background:#c8c8c8"></div>
<svg class="a" style="left:325px;top:675px;" width="12" height="12" viewBox="0 0 12 12"><path d="M6 0v12M0 6h12" stroke="#333" stroke-width="1.1"/></svg>
<svg class="a" style="left:820px;top:677px;" width="3" height="11" viewBox="0 0 3 11"><rect x=".3" y=".3" width="2.4" height="2.4" fill="#222"/><rect x=".3" y="4.3" width="2.4" height="2.4" fill="#222"/><rect x=".3" y="8.3" width="2.4" height="2.4" fill="#222"/></svg>
<div class="a" style="left:838px;top:674px;width:508px;height:15px;background:#f8f8f8;border-radius:8px"></div>
<svg class="a" style="left:844px;top:677px;" width="6" height="9" viewBox="0 0 6 9"><path d="M6 0v9L0 4.5z" fill="#707070"/></svg>
<div class="a" style="left:855px;top:677px;width:464px;height:9px;background:#707070;border-radius:5px"></div>
<svg class="a" style="left:1335px;top:677px;" width="6" height="9" viewBox="0 0 6 9"><path d="M0 0v9l6-4.5z" fill="#707070"/></svg>
<div class="a" style="left:0px;top:697px;width:1366px;height:1px;background:#fafafa"></div>
<div class="a" style="left:0px;top:698px;width:1366px;height:22px;background:#f3f3f3"></div>
<span id="t52" class="t" style="left:11px;top:704px;font-size:12px;color:#262626;font-weight:normal;transform:scaleX(0.9020);">Sẵn sàng</span>
<svg class="a" style="left:78px;top:702px;" width="15" height="14" viewBox="0 0 15 14"><rect x=".5" y=".5" width="13" height="11" fill="none" stroke="#444"/><path d="M2.5 3h7M2.5 5.5h4" stroke="#444"/><circle cx="10" cy="9.5" r="3.5" fill="#f3f3f3" stroke="#444"/><circle cx="10" cy="9.5" r="1.3" fill="#444"/></svg>
<svg class="a" style="left:110px;top:702px;" width="15" height="15" viewBox="0 0 15 15"><circle cx="5" cy="2" r="1.5" fill="none" stroke="#444"/><path d="M1 5h8M5 5v5l-3 4M5 10l3 4" fill="none" stroke="#444"/><text x="8" y="13" font-size="9" fill="#444" font-family="Liberation Sans">?</text></svg>
<span id="t53" class="t" style="left:127px;top:704px;font-size:12px;color:#262626;font-weight:normal;transform:scaleX(0.9738);">Khả năng truy cập: Không khả dụng</span>
<div class="a" style="left:1066px;top:698px;width:40px;height:22px;background:#dcdcdc"></div>
<svg class="a" style="left:1078px;top:702px;" width="15" height="14" viewBox="0 0 15 14"><rect x=".5" y=".5" width="14" height="13" fill="none" stroke="#333"/><path d="M5 .5v13M10 .5v13M.5 4.8h14M.5 9.2h14" stroke="#333"/></svg>
<svg class="a" style="left:1119px;top:702px;" width="15" height="14" viewBox="0 0 15 14"><rect x=".5" y=".5" width="14" height="13" fill="none" stroke="#333"/><rect x="3.5" y="3" width="8" height="8" fill="none" stroke="#333"/><path d="M5 5.5h5M5 8h5" stroke="#333"/></svg>
<svg class="a" style="left:1159px;top:702px;" width="15" height="14" viewBox="0 0 15 14"><rect x=".5" y=".5" width="14" height="13" fill="none" stroke="#333"/><path d="M.5 9.5h7v-9M10.5 .5v5" fill="none" stroke="#333"/></svg>
<div class="a" style="left:1192px;top:709px;width:8px;height:1px;background:#333"></div>
<div class="a" style="left:1205px;top:709px;width:100px;height:1px;background:#777"></div>
<div class="a" style="left:1242px;top:703px;width:5px;height:13px;background:#555"></div>
<div class="a" style="left:1254px;top:706px;width:1px;height:7px;background:#777"></div>
<svg class="a" style="left:1310px;top:705px;" width="9" height="9" viewBox="0 0 9 9"><path d="M4.5 0v9M0 4.5h9" stroke="#333" stroke-width="1"/></svg>
<span id="t54" class="t" style="left:1331px;top:704px;font-size:12px;color:#262626;font-weight:normal;transform:scaleX(0.8750);">80%</span>
</body></html>
